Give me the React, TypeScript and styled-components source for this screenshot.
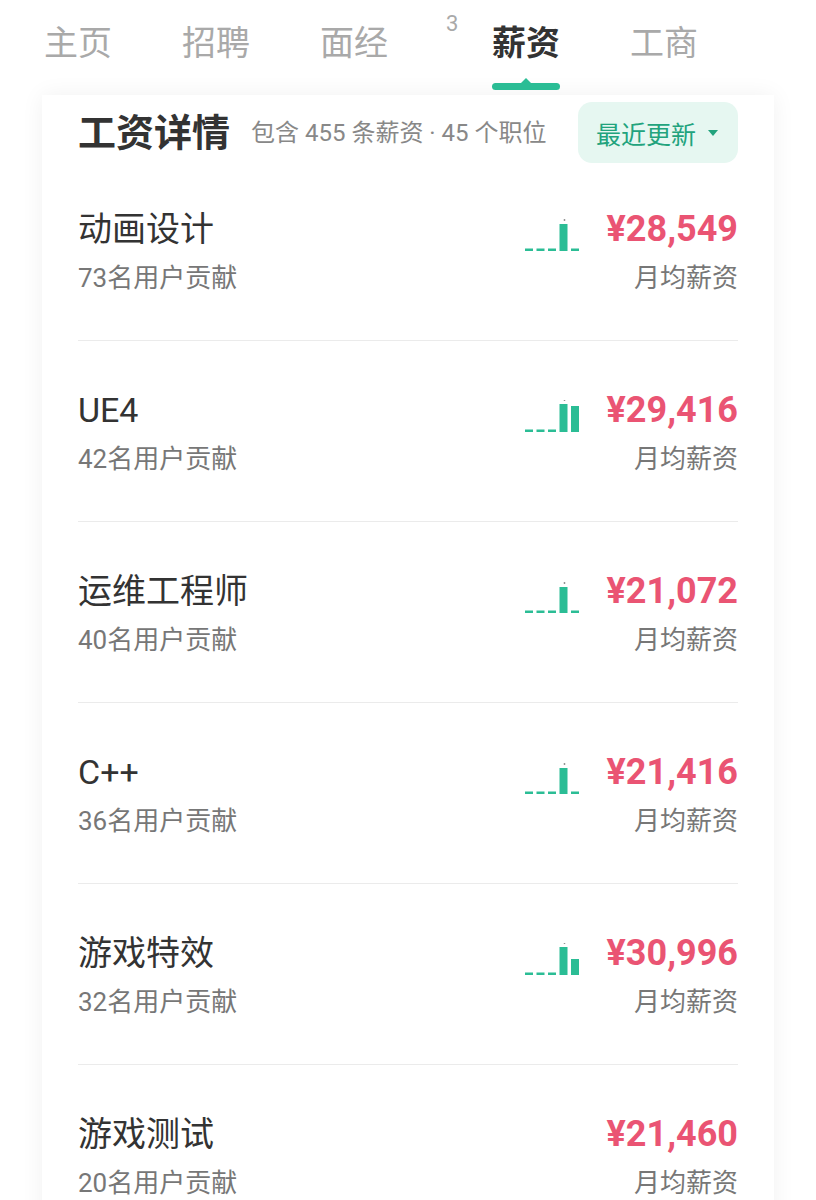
import React from "react";
import styled, { createGlobalStyle } from "styled-components";

const Global = createGlobalStyle`
  html, body { margin: 0; padding: 0; background: #ffffff; }
  body {
    font-family: Roboto, "Noto Sans CJK SC", "Noto Sans", sans-serif;
    overflow: hidden;
  }
  * { box-sizing: border-box; }
`;

const Page = styled.div`
  width: 816px;
  height: 1200px;
  overflow: hidden;
  background: #ffffff;
`;

const TabBar = styled.nav`
  display: flex;
  align-items: flex-start;
  gap: 70px;
  height: 95px;
  padding: 21px 0 0 44px;
  background: #ffffff;
`;

const Tab = styled.div<{ $shift?: number }>`
  position: relative;
  display: flex;
  flex-direction: column;
  align-items: stretch;
  margin-left: ${(p) => p.$shift ?? 0}px;
`;

const TabLabel = styled.span<{ $active?: boolean }>`
  font-size: 34px;
  line-height: 44px;
  height: 44px;
  white-space: nowrap;
  color: ${(p) => (p.$active ? "#333333" : "#a9a9a9")};
  font-weight: ${(p) => (p.$active ? 700 : 400)};
`;

const Indicator = styled.span<{ $active?: boolean }>`
  position: relative;
  display: block;
  margin-top: 18px;
  height: 7px;
  border-radius: 4px;
  background: #2bbd95;
  visibility: ${(p) => (p.$active ? "visible" : "hidden")};
  &::before {
    content: "";
    position: absolute;
    left: 50%;
    top: -5px;
    transform: translateX(-50%);
    border-left: 6px solid transparent;
    border-right: 6px solid transparent;
    border-bottom: 6px solid #2bbd95;
  }
`;

const Badge = styled.span`
  position: absolute;
  left: -46px;
  top: -9px;
  font-size: 22px;
  line-height: 24px;
  color: #a9a9a9;
`;

const Card = styled.section`
  margin: 0 42px;
  min-height: 1200px;
  padding: 0 36px;
  background: #ffffff;
  box-shadow: 0 0 22px rgba(0, 0, 0, 0.06);
`;

const Header = styled.header`
  display: flex;
  align-items: center;
  padding-top: 7px;
`;

const HeaderTitle = styled.h1`
  margin: 0;
  font-size: 38px;
  line-height: 48px;
  font-weight: 700;
  color: #333333;
`;

const HeaderSub = styled.span`
  margin-left: 21px;
  font-size: 24px;
  line-height: 30px;
  color: #888888;
  white-space: nowrap;
`;

const SortButton = styled.button`
  margin-left: auto;
  height: 61px;
  padding: 0 20px 0 18px;
  border: none;
  border-radius: 14px;
  background: #e6f7f1;
  color: #22a37d;
  font-family: inherit;
  font-size: 25px;
  display: flex;
  align-items: center;
  gap: 12px;
`;

const Caret = styled.span`
  width: 0;
  height: 0;
  border-left: 5px solid transparent;
  border-right: 5px solid transparent;
  border-top: 6px solid #22a37d;
`;

const List = styled.div`
  display: flex;
  flex-direction: column;
`;

const Row = styled.div<{ $first?: boolean }>`
  display: flex;
  justify-content: space-between;
  padding: ${(p) => (p.$first ? 44 : 47)}px 0 45px;
  border-top: ${(p) => (p.$first ? "none" : "1px solid #ebebeb")};
`;

const LeftCol = styled.div`
  display: flex;
  flex-direction: column;
  gap: 10px;
`;

const RightCol = styled.div`
  display: flex;
  flex-direction: column;
  align-items: flex-end;
  gap: 10px;
`;

const Title = styled.div`
  font-size: 34px;
  line-height: 44px;
  color: #333333;
`;

const Sub = styled.div`
  font-size: 26px;
  line-height: 34px;
  color: #777777;
`;

const SalaryLine = styled.div`
  display: flex;
  align-items: center;
  gap: 28px;
  height: 44px;
`;

const Salary = styled.span`
  font-size: 36px;
  line-height: 44px;
  font-weight: 700;
  color: #ea5473;
`;

const ChartSvg = styled.svg`
  display: block;
  margin-top: 12px;
`;

type RowData = {
  title: string;
  count: number;
  salary: string;
  bars?: number[];
};

const rows: RowData[] = [
  { title: "动画设计", count: 73, salary: "¥28,549", bars: [0, 0, 0, 27, 0] },
  { title: "UE4", count: 42, salary: "¥29,416", bars: [0, 0, 0, 28, 26] },
  { title: "运维工程师", count: 40, salary: "¥21,072", bars: [0, 0, 0, 26, 0] },
  { title: "C++", count: 36, salary: "¥21,416", bars: [0, 0, 0, 26, 0] },
  { title: "游戏特效", count: 32, salary: "¥30,996", bars: [0, 0, 0, 28, 16] },
  { title: "游戏测试", count: 20, salary: "¥21,460" },
];

const MiniChart: React.FC<{ bars: number[] }> = ({ bars }) => {
  const H = 32;
  const slot = 8;
  const gap = 3.5;
  const w = Math.round(bars.length * slot + (bars.length - 1) * gap);
  const maxIdx = bars.indexOf(Math.max(...bars));
  return (
    <ChartSvg width={w} height={H} viewBox={`0 0 ${w} ${H}`}>
      {bars.map((v, i) => {
        const h = v > 0 ? v : 2.5;
        return (
          <rect
            key={i}
            x={i * (slot + gap)}
            y={H - h}
            width={slot}
            height={h}
            fill="#2bbd95"
          />
        );
      })}
      <circle
        cx={maxIdx * (slot + gap) + 5}
        cy={H - bars[maxIdx] - 4}
        r={0.9}
        fill="#8a8a8a"
      />
    </ChartSvg>
  );
};

const tabs = ["主页", "招聘", "面经", "薪资", "工商"];

export default function App() {
  return (
    <Page>
      <Global />
      <TabBar>
        {tabs.map((t) => {
          const active = t === "薪资";
          return (
            <Tab key={t} $shift={active ? 34 : 0}>
              {active && <Badge>3</Badge>}
              <TabLabel $active={active}>{t}</TabLabel>
              <Indicator $active={active} />
            </Tab>
          );
        })}
      </TabBar>
      <Card>
        <Header>
          <HeaderTitle>工资详情</HeaderTitle>
          <HeaderSub>包含 455 条薪资 · 45 个职位</HeaderSub>
          <SortButton>
            最近更新
            <Caret />
          </SortButton>
        </Header>
        <List>
          {rows.map((r, i) => (
            <Row key={r.title} $first={i === 0}>
              <LeftCol>
                <Title>{r.title}</Title>
                <Sub>{r.count}名用户贡献</Sub>
              </LeftCol>
              <RightCol>
                <SalaryLine>
                  {r.bars && <MiniChart bars={r.bars} />}
                  <Salary>{r.salary}</Salary>
                </SalaryLine>
                <Sub>月均薪资</Sub>
              </RightCol>
            </Row>
          ))}
        </List>
      </Card>
    </Page>
  );
}
